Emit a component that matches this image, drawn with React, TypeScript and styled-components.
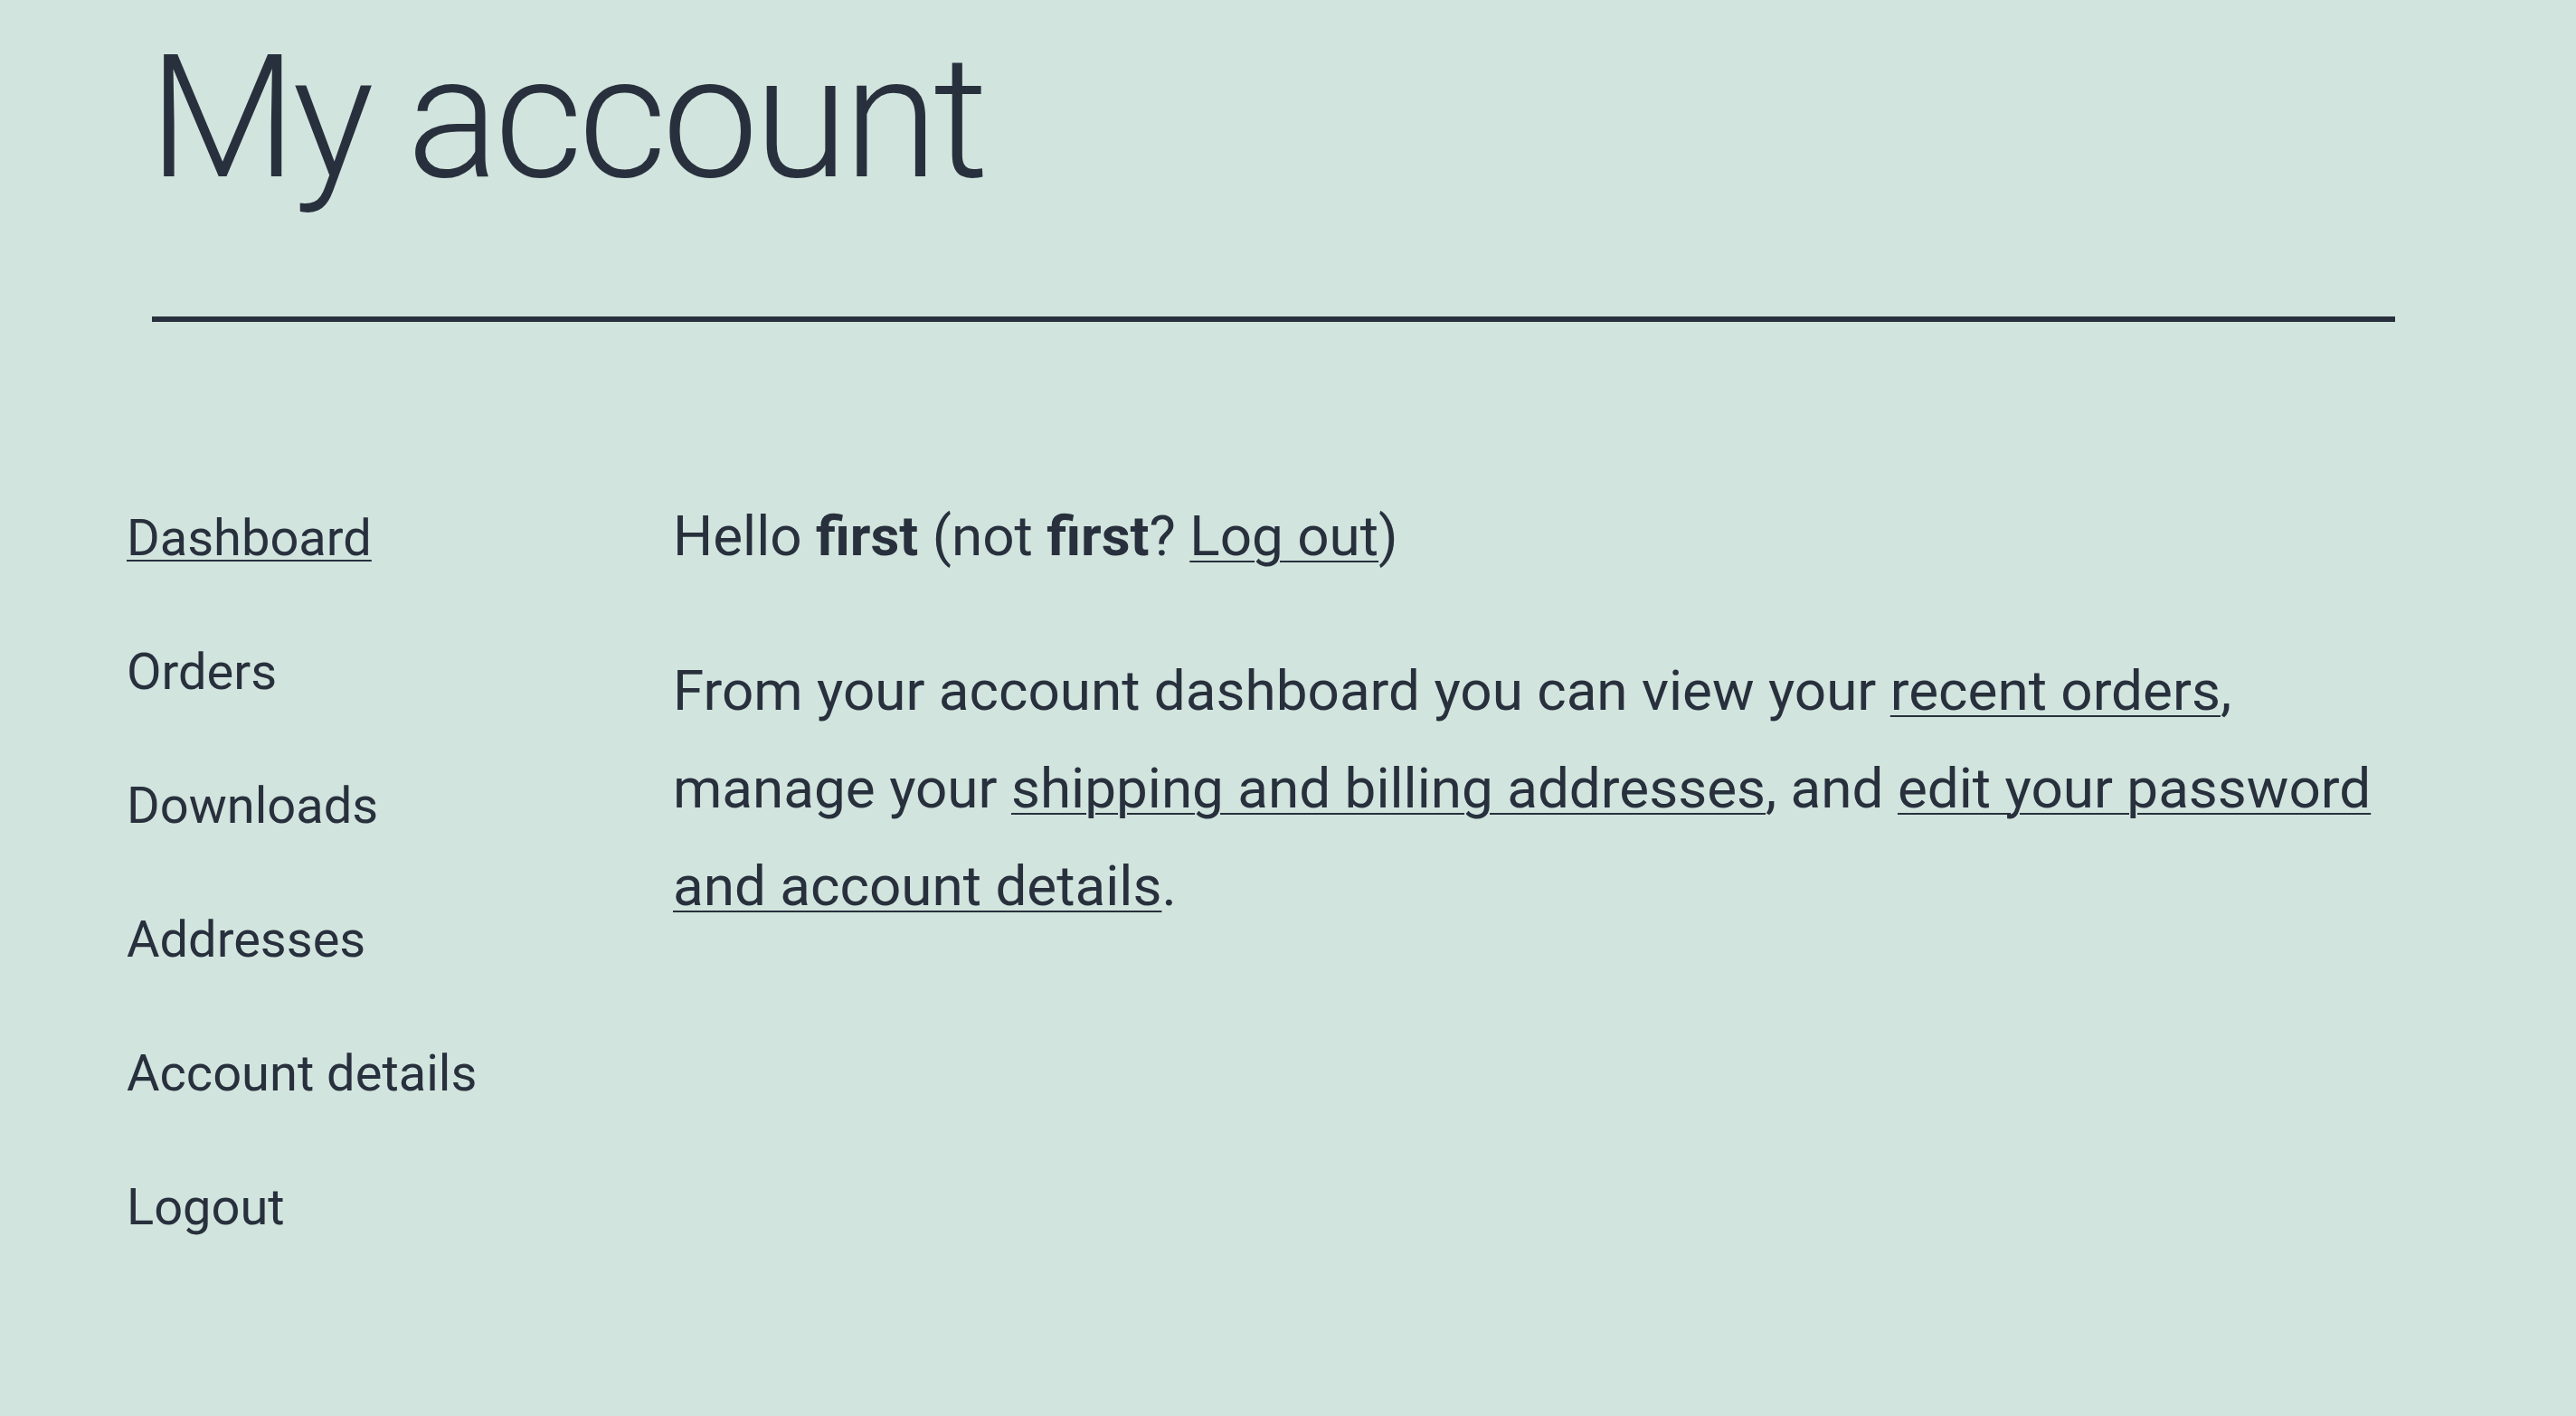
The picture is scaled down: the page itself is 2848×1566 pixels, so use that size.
import styled, { createGlobalStyle } from "styled-components";

const GlobalStyle = createGlobalStyle`
    html, body {
        margin: 0;
        padding: 0;
        background: #d1e4dd;
    }
    body {
        font-family: Roboto, "Liberation Sans", sans-serif;
        color: #28303d;
    }
`;

const Page = styled.div`
    min-height: 1566px;
    padding-top: 16px;
    box-sizing: border-box;
`;

const Header = styled.header`
    margin-left: 168px;
    width: 2480px;
`;

const Title = styled.h1`
    margin: 0 0 0 -4px;
    font-size: 190px;
    line-height: 1.2;
    font-weight: 300;
    letter-spacing: -0.027em;
`;

const Rule = styled.hr`
    margin: 106px 0 0 0;
    border: none;
    height: 6px;
    background: #28303d;
`;

const Columns = styled.div`
    display: grid;
    grid-template-columns: 604px 1905px;
    align-items: start;
    margin-top: 165px;
    padding-left: 140px;
`;

const Nav = styled.nav`
    display: flex;
    flex-direction: column;
`;

const NavItem = styled.a<{ $active?: boolean }>`
    font-size: 56px;
    line-height: 148px;
    color: #28303d;
    text-decoration: ${(p) => (p.$active ? "underline" : "none")};
    text-decoration-thickness: 2px;
    text-underline-offset: 0.09em;
    cursor: pointer;
`;

const Content = styled.div`
    padding-top: 18px;
    font-size: 62px;
    line-height: 108px;
    p {
        margin: 0 0 63px 0;
    }
    strong {
        font-weight: 700;
    }
    a {
        color: #28303d;
        text-decoration: underline;
        text-decoration-thickness: 2px;
        text-underline-offset: 0.09em;
    }
`;

const navItems = [
    "Dashboard",
    "Orders",
    "Downloads",
    "Addresses",
    "Account details",
    "Logout",
];

const App = () => {
    return (
        <>
            <GlobalStyle />
            <Page>
                <Header>
                    <Title>My account</Title>
                    <Rule />
                </Header>
                <Columns>
                    <Nav>
                        {navItems.map((item, i) => (
                            <NavItem key={item} $active={i === 0}>
                                {item}
                            </NavItem>
                        ))}
                    </Nav>
                    <Content>
                        <p>
                            Hello <strong>first</strong> (not{" "}
                            <strong>first</strong>? <a>Log out</a>)
                        </p>
                        <p>
                            From your account dashboard you can view your{" "}
                            <a>recent orders</a>, manage your{" "}
                            <a>shipping and billing addresses</a>, and{" "}
                            <a>edit your password and account details</a>.
                        </p>
                    </Content>
                </Columns>
            </Page>
        </>
    );
};

export default App;
